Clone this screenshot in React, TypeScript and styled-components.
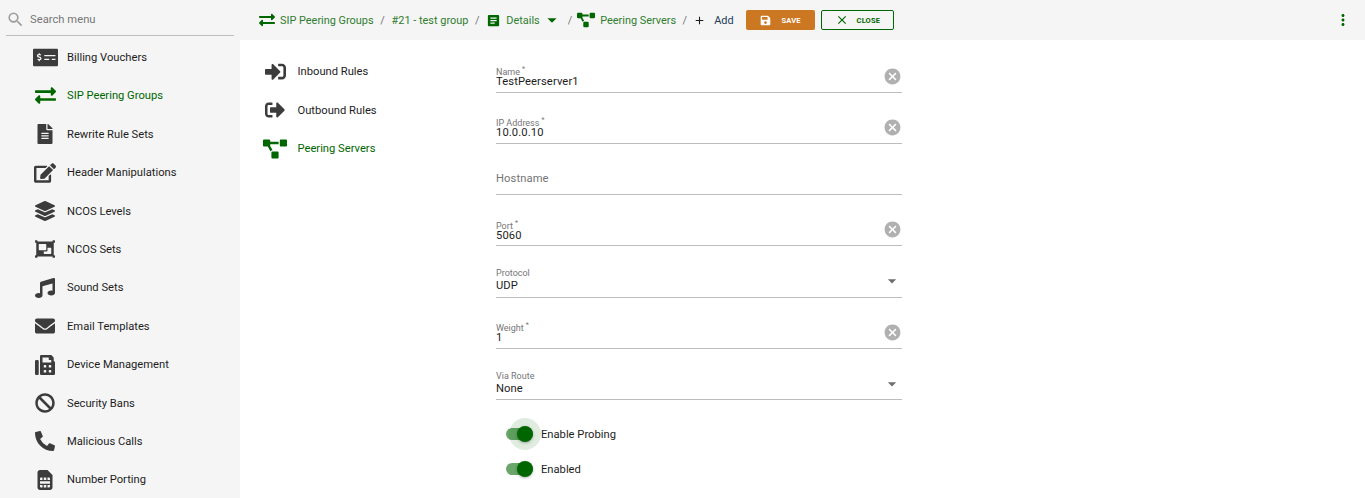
import React from "react";
import styled, { createGlobalStyle } from "styled-components";
import {
  FaMoneyCheckAlt, FaExchangeAlt, FaFileAlt, FaEdit, FaLayerGroup, FaObjectGroup, FaMusic,
  FaEnvelope, FaFax, FaBan, FaPhoneAlt, FaSimCard, FaSignInAlt, FaSignOutAlt, FaProjectDiagram, FaSave,
} from "react-icons/fa";
import { MdArrowDropDown, MdCancel, MdClose, MdSearch, MdAdd, MdMoreVert, MdArticle } from "react-icons/md";

const GREEN = "#006600";
const DARK = "#3c3c3c";

const Global = createGlobalStyle`
  html, body { margin: 0; padding: 0; height: 100%; background: #fff; overflow: hidden; }
  body { font-family: Roboto, "Liberation Sans", sans-serif; color: #1d1d1d; }
`;

const Page = styled.div`
  display: flex;
  width: 1365px;
  height: 498px;
  overflow: hidden;
`;

const Sidebar = styled.aside`
  width: 240px;
  flex: none;
  background: #f5f5f5;
  display: flex;
  flex-direction: column;
`;

const SearchBox = styled.div`
  flex: none;
  height: 36px;
  margin: 0 6px;
  display: flex;
  align-items: center;
  gap: 5px;
  border-bottom: 1px solid #bdbdbd;
  font-size: 11.2px;
  letter-spacing: 0.03px;
  color: #757575;
  padding-top: 3px;
  box-sizing: border-box;
`;

const MenuList = styled.nav`
  display: flex;
  flex-direction: column;
  padding-top: 2.3px;
`;

const MenuRow = styled.div<{ $active?: boolean }>`
  flex: none;
  height: 38.4px;
  display: flex;
  align-items: center;
  font-size: 11.2px;
  color: ${(p) => (p.$active ? GREEN : "#1d1d1d")};
`;

const MenuIcon = styled.span`
  width: 67px;
  padding-left: 31px;
  box-sizing: border-box;
  flex: none;
  display: flex;
  justify-content: center;
  padding-right: 8px;
`;

const Main = styled.main`
  flex: 1;
  display: flex;
  flex-direction: column;
  min-width: 0;
`;

const TopBar = styled.header`
  height: 40px;
  flex: none;
  background: #f5f5f5;
  display: flex;
  align-items: center;
  padding-left: 19px;
  font-size: 10.92px;
  color: ${GREEN};
`;

const Crumb = styled.span<{ $gap?: number; $plain?: boolean }>`
  display: inline-flex;
  align-items: center;
  gap: ${(p) => p.$gap ?? 5}px;
  color: ${(p) => (p.$plain ? "#1d3d5c" : "#2f7d2f")};
  white-space: nowrap;
`;

const Sep = styled.span<{ $w?: number }>`
  width: ${(p) => p.$w ?? 24}px;
  text-align: center;
  color: #757575;
  flex: none;
`;

const CrumbArrow = styled.span`
  display: flex;
  margin-left: 1px;
  color: ${GREEN};
`;

const SaveButton = styled.button`
  width: 69px;
  height: 20px;
  margin-left: 12px;
  border: 0;
  border-radius: 2px;
  background: #cc7722;
  color: #fff;
  font: 700 7.5px Roboto, sans-serif;
  display: flex;
  align-items: center;
  gap: 11px;
  padding: 0 0 0 14px;
  letter-spacing: 0.15px;
`;

const CloseButton = styled.button`
  width: 73px;
  height: 20px;
  margin-left: 6px;
  border: 1px solid ${GREEN};
  border-radius: 2px;
  background: transparent;
  color: ${GREEN};
  font: 700 7.5px Roboto, sans-serif;
  display: flex;
  align-items: center;
  gap: 8px;
  padding: 0 0 0 13px;
  box-sizing: border-box;
  letter-spacing: 0.15px;
`;

const MoreButton = styled.span`
  margin-left: auto;
  margin-right: 13px;
  display: flex;
  color: ${GREEN};
`;

const Content = styled.div`
  flex: 1;
  display: flex;
  background: #fff;
`;

const SubNav = styled.nav`
  width: 256px;
  flex: none;
  padding-top: 12.6px;
  display: flex;
  flex-direction: column;
`;

const SubRow = styled.div<{ $active?: boolean }>`
  height: 38.4px;
  display: flex;
  align-items: center;
  font-size: 11.2px;
  color: ${(p) => (p.$active ? GREEN : "#1d1d1d")};
`;

const SubIcon = styled.span`
  width: 57.5px;
  padding-left: 23px;
  padding-right: 10.5px;
  flex: none;
  box-sizing: border-box;
  display: flex;
  justify-content: center;
`;

const Form = styled.div`
  width: 406px;
  flex: none;
  display: flex;
  flex-direction: column;
  padding-top: 1.6px;
`;

const Field = styled.div<{ $select?: boolean }>`
  height: 51.2px;
  box-sizing: border-box;
  border-bottom: 1px solid #bdbdbd;
  display: flex;
  align-items: flex-end;
  justify-content: space-between;
  padding-bottom: ${(p) => (p.$select ? 3.4 : 2.8)}px;
`;

const FieldText = styled.div`
  display: flex;
  flex-direction: column;
  min-width: 0;
`;

const FieldLabel = styled.label<{ $tall?: boolean }>`
  font-size: 9px;
  line-height: 9px;
  color: #757575;
  margin-bottom: ${(p) => (p.$tall ? 1 : -2)}px;
  display: block;
`;

const Star = styled.sup`
  font-size: 7px;
  line-height: 0;
  margin-left: 2px;
  vertical-align: 4px;
`;

const FieldValue = styled.div`
  font-size: 11.2px;
  line-height: 14px;
  color: #1d1d1d;
  letter-spacing: 0.105px;
`;

const Placeholder = styled.div`
  font-size: 11.2px;
  line-height: 14px;
  color: #757575;
  letter-spacing: 0.105px;
  margin-bottom: 5px;
`;

const ClearIcon = styled.span`
  display: flex;
  color: #b0b0b0;
  margin-bottom: 3.2px;
`;

const DropIcon = styled.span`
  display: flex;
  color: #6e6e6e;
  margin-bottom: 2px;
`;

const ToggleRow = styled.div`
  display: flex;
  align-items: center;
  height: 35px;
  padding-left: 10px;
  font-size: 11.2px;
  color: #1d1d1d;
`;

const Toggle = styled.span`
  position: relative;
  width: 27px;
  height: 12px;
  border-radius: 6px;
  background: #6aa56a;
  margin-right: 8px;
  flex: none;
`;

const Thumb = styled.span`
  position: absolute;
  right: 0;
  top: -2px;
  width: 16px;
  height: 16px;
  border-radius: 50%;
  background: ${GREEN};
  box-shadow: 0 1px 3px rgba(0, 0, 0, 0.3);
`;

const Halo = styled.span`
  position: absolute;
  right: -8px;
  top: -10px;
  width: 32px;
  height: 32px;
  border-radius: 50%;
  background: rgba(0, 102, 0, 0.12);
`;

const Toggles = styled.div`
  display: flex;
  flex-direction: column;
  padding-top: 16.6px;
`;

const menu = [
  { t: "Billing Vouchers", i: <FaMoneyCheckAlt size={25} color={DARK} /> },
  { t: "SIP Peering Groups", i: <FaExchangeAlt size={21} color={GREEN} />, a: true },
  { t: "Rewrite Rule Sets", i: <FaFileAlt size={20} color={DARK} /> },
  { t: "Header Manipulations", i: <FaEdit size={22} color={DARK} /> },
  { t: "NCOS Levels", i: <FaLayerGroup size={20} color={DARK} /> },
  { t: "NCOS Sets", i: <FaObjectGroup size={20} color={DARK} /> },
  { t: "Sound Sets", i: <FaMusic size={20} color={DARK} /> },
  { t: "Email Templates", i: <FaEnvelope size={20} color={DARK} /> },
  { t: "Device Management", i: <FaFax size={20} color={DARK} /> },
  { t: "Security Bans", i: <FaBan size={20} color={DARK} /> },
  { t: "Malicious Calls", i: <FaPhoneAlt size={20} color={DARK} /> },
  { t: "Number Porting", i: <FaSimCard size={20} color={DARK} /> },
];

type F = { label?: string; star?: boolean; value?: string; ph?: string; kind: "clear" | "drop" | "none" };
const fields: F[] = [
  { label: "Name", star: true, value: "TestPeerserver1", kind: "clear" },
  { label: "IP Address", star: true, value: "10.0.0.10", kind: "clear" },
  { ph: "Hostname", kind: "none" },
  { label: "Port", star: true, value: "5060", kind: "clear" },
  { label: "Protocol", value: "UDP", kind: "drop" },
  { label: "Weight", star: true, value: "1", kind: "clear" },
  { label: "Via Route", value: "None", kind: "drop" },
];

export default function App() {
  return (
    <Page>
      <Global />
      <Sidebar>
        <SearchBox>
          <MdSearch size={19} color="#9e9e9e" />
          Search menu
        </SearchBox>
        <MenuList>
          {menu.map((m) => (
            <MenuRow key={m.t} $active={m.a}>
              <MenuIcon>{m.i}</MenuIcon>
              {m.t}
            </MenuRow>
          ))}
        </MenuList>
      </Sidebar>
      <Main>
        <TopBar>
          <Crumb $gap={5}><FaExchangeAlt size={16} color={GREEN} />SIP Peering Groups</Crumb>
          <Sep $w={18}>/</Sep>
          <Crumb>#21 - test group</Crumb>
          <Sep $w={18}>/</Sep>
          <Crumb $gap={5}><MdArticle size={15} color={GREEN} />Details</Crumb>
          <CrumbArrow><MdArrowDropDown size={22} /></CrumbArrow>
          <Sep $w={14.5}>/</Sep>
          <Crumb $gap={5}><FaProjectDiagram size={18} color={GREEN} />Peering Servers</Crumb>
          <Sep $w={17}>/</Sep>
          <Crumb $plain $gap={8}><MdAdd size={13} color="#1d1d1d" />Add</Crumb>
          <SaveButton><FaSave size={11} />SAVE</SaveButton>
          <CloseButton><MdClose size={14} />CLOSE</CloseButton>
          <MoreButton><MdMoreVert size={18} /></MoreButton>
        </TopBar>
        <Content>
          <SubNav>
            <SubRow><SubIcon><FaSignInAlt size={21} color={DARK} /></SubIcon>Inbound Rules</SubRow>
            <SubRow><SubIcon><FaSignOutAlt size={20} color={DARK} /></SubIcon>Outbound Rules</SubRow>
            <SubRow $active><SubIcon><FaProjectDiagram size={24} color={GREEN} /></SubIcon>Peering Servers</SubRow>
          </SubNav>
          <Form>
            {fields.map((f, i) => (
              <Field key={i} $select={f.kind === "drop"}>
                <FieldText>
                  {f.label && (
                    <FieldLabel $tall={!f.star}>
                      {f.label}
                      {f.star && <Star>*</Star>}
                    </FieldLabel>
                  )}
                  {f.value && <FieldValue>{f.value}</FieldValue>}
                  {f.ph && <Placeholder>{f.ph}</Placeholder>}
                </FieldText>
                {f.kind === "clear" && <ClearIcon><MdCancel size={19} /></ClearIcon>}
                {f.kind === "drop" && <DropIcon><MdArrowDropDown size={20} /></DropIcon>}
              </Field>
            ))}
            <Toggles>
              <ToggleRow>
                <Toggle><Halo /><Thumb /></Toggle>
                Enable Probing
              </ToggleRow>
              <ToggleRow>
                <Toggle><Thumb /></Toggle>
                Enabled
              </ToggleRow>
            </Toggles>
          </Form>
        </Content>
      </Main>
    </Page>
  );
}
